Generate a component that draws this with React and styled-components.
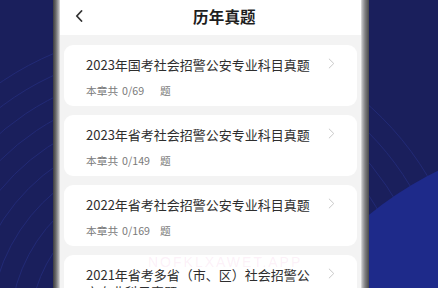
import styled, { createGlobalStyle } from "styled-components";

const Global = createGlobalStyle`
  html, body {
    margin: 0;
    padding: 0;
    width: 438px;
    height: 288px;
    overflow: hidden;
    background: #1a1f5c;
    font-family: "Noto Sans CJK SC", "Noto Sans", sans-serif;
  }
`;

const Stage = styled.div`
  position: relative;
  width: 438px;
  height: 288px;
  overflow: hidden;
  background: #1a1f5c;
`;

const Backdrop = styled.svg`
  position: absolute;
  left: 0;
  top: 0;
  width: 438px;
  height: 288px;
`;

const Phone = styled.div`
  position: relative;
  margin-left: 53px;
  width: 316px;
  height: 288px;
  display: flex;
  background: linear-gradient(
    to right,
    #3b3b3d 0px,
    #6e6e70 3px,
    #b9b9bb 6px,
    #e6e6e6 7px,
    #e6e6e6 308px,
    #bdbdbf 309px,
    #808082 312px,
    #48484a 316px
  );
  padding: 0 8px 0 7px;
  box-sizing: border-box;
`;

const Screen = styled.div`
  flex: 1;
  display: flex;
  flex-direction: column;
  background: #f3f3f3;
  overflow: hidden;
`;

const Header = styled.div`
  height: 35px;
  flex-shrink: 0;
  background: #fff;
  display: flex;
  align-items: center;
  padding-left: 15px;
`;

const Back = styled.svg`
  width: 8px;
  height: 12px;
  margin-top: -4px;
`;

const Title = styled.div`
  margin-left: 110px;
  margin-top: -4px;
  font-size: 15.5px;
  font-weight: 700;
  color: #1e1e1e;
  letter-spacing: 0.2px;
`;

const List = styled.div`
  display: flex;
  flex-direction: column;
  gap: 9px;
  padding: 10px 4px 0 4px;
`;

const Card = styled.div`
  background: #fff;
  border-radius: 9px;
  min-height: 61px;
  box-sizing: border-box;
  padding: 11px 22px 0 22px;
  display: flex;
  gap: 10px;
`;

const Body = styled.div`
  flex: 1;
  display: flex;
  flex-direction: column;
`;

const Name = styled.div`
  font-size: 13px;
  line-height: 17px;
  color: #2e2e2e;
  max-width: 232px;
`;

const Count = styled.div`
  margin-top: 11px;
  display: flex;
  align-items: center;
  font-size: 10.7px;
  line-height: 14px;
  color: #7a7a7a;
`;

const Num = styled.span`
  margin-left: 4px;
  width: 38px;
`;

const Arrow = styled.svg`
  width: 7px;
  height: 11px;
  margin-top: 2px;
  flex-shrink: 0;
`;

const Watermark = styled.div`
  position: absolute;
  left: 95px;
  top: 254px;
  font-size: 14px;
  letter-spacing: 2px;
  color: rgba(235, 150, 205, 0.14);
  font-family: "Liberation Sans", sans-serif;
  pointer-events: none;
`;

const items = [
  { name: "2023年国考社会招警公安专业科目真题", done: 0, total: 69 },
  { name: "2023年省考社会招警公安专业科目真题", done: 0, total: 149 },
  { name: "2022年省考社会招警公安专业科目真题", done: 0, total: 169 },
  { name: "2021年省考多省（市、区）社会招警公安专业科目真题", done: 0, total: 120 },
];

export default function App() {
  return (
    <Stage>
      <Global />
      <Backdrop viewBox="0 0 438 288">
        <g fill="none" stroke="#2a3590" strokeWidth="1" opacity="0.5">
          <circle cx="170" cy="330" r="300" />
          <circle cx="170" cy="330" r="280" />
          <circle cx="170" cy="330" r="260" />
          <circle cx="170" cy="330" r="240" />
          <circle cx="170" cy="330" r="220" />
          <circle cx="170" cy="330" r="200" />
          <circle cx="170" cy="330" r="180" />
          <circle cx="170" cy="330" r="160" />
          <circle cx="170" cy="330" r="140" />
        </g>
        <circle cx="600" cy="500" r="367" fill="#1e2a8a" />
      </Backdrop>
      <Phone>
        <Screen>
          <Header>
            <Back viewBox="0 0 8 12">
              <path d="M6.5 1 L1.8 6 L6.5 11" fill="none" stroke="#333" strokeWidth="1.8" strokeLinecap="round" strokeLinejoin="round" />
            </Back>
            <Title>历年真题</Title>
          </Header>
          <List>
            {items.map((it) => (
              <Card key={it.name}>
                <Body>
                  <Name>{it.name}</Name>
                  <Count>
                    本章共
                    <Num>
                      {it.done}/{it.total}
                    </Num>
                    题
                  </Count>
                </Body>
                <Arrow viewBox="0 0 7 11">
                  <path d="M1.2 1 L5.8 5.5 L1.2 10" fill="none" stroke="#c8c8c8" strokeWidth="1" strokeLinecap="round" strokeLinejoin="round" />
                </Arrow>
              </Card>
            ))}
          </List>
        </Screen>
        <Watermark>NOFKLXAWET.APP</Watermark>
      </Phone>
    </Stage>
  );
}
